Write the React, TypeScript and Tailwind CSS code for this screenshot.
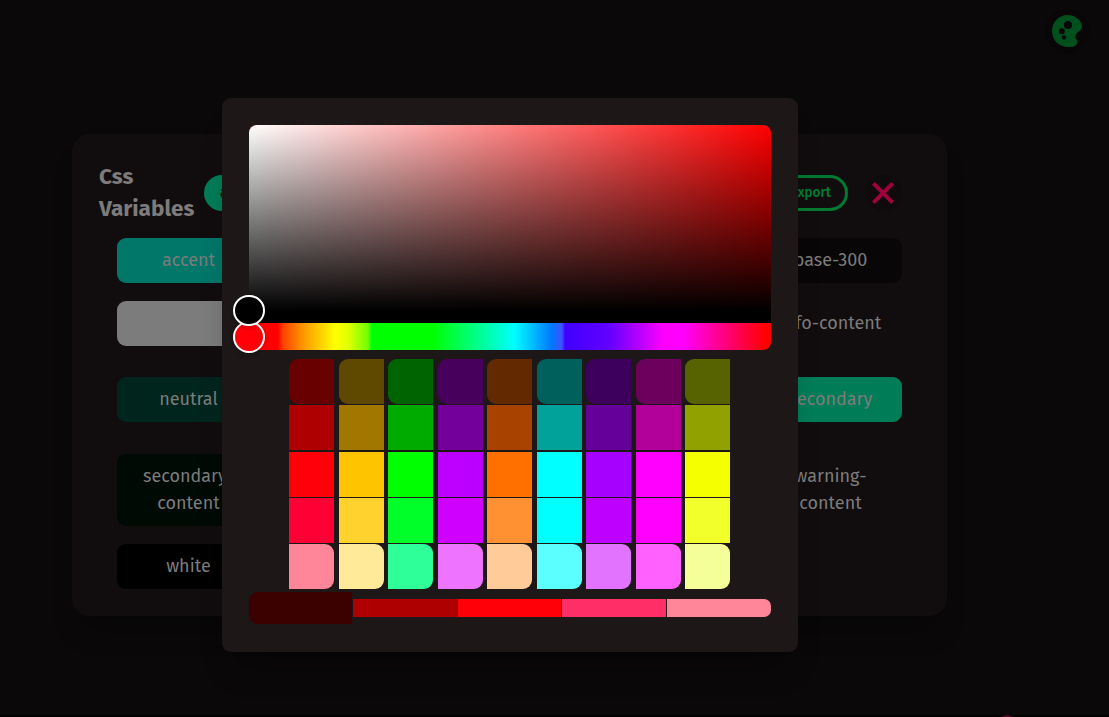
import React from 'react';

const columns: string[][] = [
  ['#680000', '#ae0000', '#ff0008', '#ff0035', '#ff8699'],
  ['#5f4900', '#a17700', '#ffc400', '#ffd22e', '#ffea99'],
  ['#006500', '#00ab00', '#00ff00', '#00ff28', '#2eff99'],
  ['#47005b', '#74009c', '#bb00ff', '#d000ff', '#ee73ff'],
  ['#632900', '#a84200', '#ff7000', '#ff9133', '#ffcc99'],
  ['#00605b', '#00a29a', '#00ffff', '#00ffff', '#5cffff'],
  ['#3e005d', '#66009a', '#a600ff', '#bd00ff', '#e173ff'],
  ['#6d005c', '#b2009a', '#ff00ff', '#ff00ff', '#ff61ff'],
  ['#566300', '#91a200', '#f5ff00', '#f2ff2b', '#f5ff99'],
];

const rows: { cells: [string, string][]; height: string }[] = [
  { height: 'h-[45px]', cells: [['accent', 'bg-[#007769]'], ['base-100', 'bg-[#0e0b0b]'], ['base-200', 'bg-[#0b0808]'], ['base-300', 'bg-[#090607]']] },
  { height: 'h-[45px]', cells: [['', 'bg-[#7c7c7c]'], ['error', ''], ['info', ''], ['info-content', '']] },
  { height: 'h-[45px]', cells: [['neutral', 'bg-[#00251d]'], ['primary', ''], ['success', ''], ['secondary', 'bg-[#007d57]']] },
  { height: 'h-[72px]', cells: [['secondary-content', 'bg-[#000a04]'], ['warning', ''], ['black', ''], ['warning-content', '']] },
  { height: 'h-[45px]', cells: [['white', 'bg-black']] },
];

const gaps = ['mt-0', 'mt-[18px]', 'mt-[31px]', 'mt-8', 'mt-[18px]'];

function PaletteIcon() {
  return (
    <svg viewBox="0 0 30 32" className="h-8 w-[30px]" fill="#00501e">
      <path
        fillRule="evenodd"
        d="M15.500 0C6.800 0 0 7 0 16s7 16 16.300 16c3 0 6-.4 7.400-1.600 1.300-1.100 2.100-2.700 1.600-4.300-.5-1.600-1.900-2.900-1.900-4.700 0-2.500 2.200-3.900 4.200-5.700 1.600-1.400 2.400-3 2.400-4.500C30 6.500 24 0 15.500 0ZM16 6a4 4 0 1 1 0 8 4 4 0 0 1 0-8ZM9.800 13.200a3 3 0 1 1 0 6 3 3 0 0 1 0-6ZM12 20.300a2.200 2.200 0 1 1 0 4.400 2.200 2.200 0 0 1 0-4.400Z"
      />
    </svg>
  );
}

function VariablesCard() {
  return (
    <section className="h-[481.500px] w-[875px] rounded-[18px] bg-[#110d0e] px-[27px] pt-[27px] text-[#7d7b7b] shadow-[0_22px_28px_-10px_rgba(0,0,0,0.3)]">
      <header className="flex h-[64px] items-center pr-[18px]">
        <h2 className="-mt-px w-[105px] text-[22.500px] leading-[31.500px] font-bold">Css Variables</h2>
        <button className="h-9 w-[100px] rounded-full bg-[#007d57] px-[16px] pt-px text-left text-[13.500px] font-semibold text-[#000a04]">add</button>
        <button className="ml-auto h-9 w-[92px] rounded-full border-[3px] border-[#007a30] pt-px pr-[14px] text-right text-[13.500px] font-semibold text-[#007a30]">Export</button>
        <button className="ml-[18px] flex size-9 items-center justify-center rounded-full bg-[#0f0b0c] pr-[2px]">
          <svg viewBox="0 0 22 22" className="size-[22px]" stroke="#a1003b" strokeWidth="4" strokeLinecap="square">
            <path d="M2.800 2.800 19.200 19.200M19.200 2.800 2.800 19.200" />
          </svg>
        </button>
      </header>
      <div className="px-[18px] pt-[13px]">
        {rows.map((row, i) => (
          <div key={i} className={`flex justify-between ${gaps[i]}`}>
            {row.cells.map(([label, color], j) => (
              <div key={j} className={`flex w-[143px] items-center justify-center rounded-[9px] px-[18px] text-center text-[18px] leading-[27px] ${row.height} ${color}`}>
                {label}
              </div>
            ))}
          </div>
        ))}
      </div>
    </section>
  );
}

function ColorPicker() {
  return (
    <div className="h-[225px] w-[522px]">
      <div className="relative z-10 h-[198px] rounded-t-[8px] border-b-[12px] border-black bg-[linear-gradient(to_top,#000,transparent),linear-gradient(to_right,#fff,transparent),linear-gradient(#ff0000,#ff0000)] bg-origin-padding">
        <div className="absolute -bottom-[15px] -left-[16px] size-[31.500px] rounded-full border-2 border-white bg-black shadow-[0_2px_4px_rgba(0,0,0,0.2)]" />
      </div>
      <div className="relative h-[27px] rounded-b-[8px] bg-[linear-gradient(to_right,#ff0000_0%,#ff0000_5.500%,#ff4000_6.500%,#ff9000_10%,#ffff00_16.500%,#e0ff00_19%,#70ff00_22.800%,#00ff00_23.500%,#00ff00_35%,#00ff80_43%,#00ffff_50.800%,#0078ff_58%,#4052ff_59.900%,#4000ff_60.600%,#6200ff_69%,#ff00ff_79.500%,#ff00ff_83%,#ff0080_91%,#ff0000_99%)]">
        <div className="absolute -top-[2px] -left-[16px] size-[31.500px] rounded-full border-2 border-white bg-[#ff0008] shadow-[0_2px_4px_rgba(0,0,0,0.2)]" />
      </div>
    </div>
  );
}

function PickerDialog() {
  return (
    <div className="flex h-[554px] w-[576px] flex-col rounded-[9px] bg-[#1d1717] p-[27px] shadow-[0_25px_30px_-12px_rgba(0,0,0,0.3)]">
      <ColorPicker />
      <div className="mt-[9px] flex justify-center gap-[4.500px] pr-[0.500px]">
        {columns.map((shades, i) => (
          <div key={i} className="flex flex-col gap-[1.250px]">
            {shades.map((shade, j) => (
              <div key={j} className="size-[45px] first:rounded-l-[9px] last:rounded-r-[9px]" style={{ backgroundColor: shade }} />
            ))}
          </div>
        ))}
      </div>
      <div className="mt-[2px] flex h-[34px] items-center gap-px">
        <div className="h-8 w-[103px] rounded-l-[9px] bg-[#3b0000]" />
        <div className="h-[18px] w-[104px] bg-[#ae0000]" />
        <div className="h-[18px] w-[103px] bg-[#ff0008]" />
        <div className="h-[18px] w-[104px] bg-[#ff2e66]" />
        <div className="h-[18px] flex-1 rounded-r-[7px] bg-[#ff8699]" />
      </div>
    </div>
  );
}

export default function App() {
  return (
    <div className="relative flex h-[717px] flex-col overflow-hidden bg-[#0a0809] font-['Fira_Sans','Noto_Sans',sans-serif]">
      <main className="flex-1 pt-[134px] pl-[72px]">
        <VariablesCard />
      </main>
      <div className="h-[2px] bg-black" />
      <div className="absolute top-[9px] right-5 flex size-[44px] items-center justify-center rounded-full bg-[#080607]">
        <PaletteIcon />
      </div>
      <div className="absolute -bottom-[16px] left-[998px] size-[18px] rounded-full bg-[#5c0026]" />
      <div className="absolute top-[98px] left-[222px]">
        <PickerDialog />
      </div>
    </div>
  );
}
